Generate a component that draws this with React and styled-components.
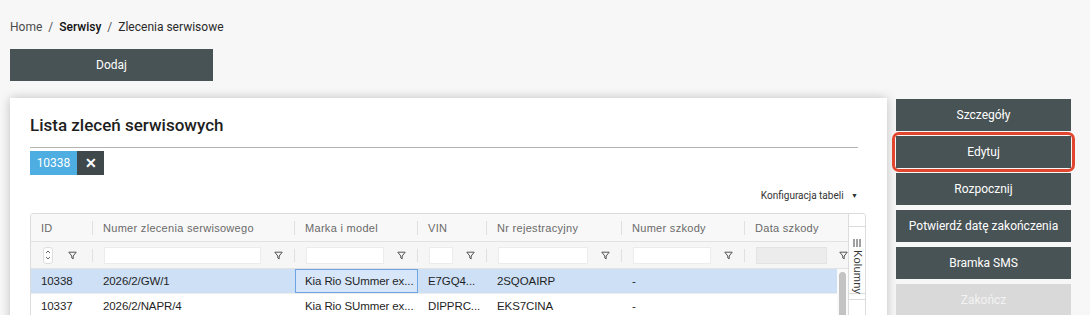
import React from 'react';
import styled, { createGlobalStyle } from 'styled-components';

const GlobalStyle = createGlobalStyle`
  body {
    margin: 0;
    background: #f7f7f7;
    font-family: Roboto, "Liberation Sans", sans-serif;
    color: #222;
  }
`;

const columns = [
  { key: 'id', title: 'ID', width: 62 },
  { key: 'number', title: 'Numer zlecenia serwisowego', width: 202 },
  { key: 'model', title: 'Marka i model', width: 123 },
  { key: 'vin', title: 'VIN', width: 69 },
  { key: 'plate', title: 'Nr rejestracyjny', width: 135 },
  { key: 'claim', title: 'Numer szkody', width: 123 },
  { key: 'claimDate', title: 'Data szkody', width: 103 },
];

const rows = [
  { id: '10338', number: '2026/2/GW/1', model: 'Kia Rio SUmmer ex...', vin: 'E7GQ4...', plate: '2SQOAIRP', claim: '-', claimDate: '' },
  { id: '10337', number: '2026/2/NAPR/4', model: 'Kia Rio SUmmer ex...', vin: 'DIPPRC...', plate: 'EKS7CINA', claim: '-', claimDate: '' },
];

const actions = ['Szczegóły', 'Edytuj', 'Rozpocznij', 'Potwierdź datę zakończenia', 'Bramka SMS', 'Zakończ'];

const headerTemplate = columns.map((c) => `${c.width}px`).join(' ');
const bodyTemplate = columns.map((c, i) => (i === columns.length - 1 ? `${c.width - 11}px` : `${c.width}px`)).join(' ');

const FunnelIcon = () => (
  <svg width="9" height="9" viewBox="0 0 9 9">
    <path d="M0.8 1.2 H8.2 L5.2 5 V7.8 L3.8 7 V5 Z" fill="none" stroke="#444" strokeWidth="0.9" strokeLinejoin="round" />
  </svg>
);

const SortIcon = () => (
  <SortBox>
    <svg width="6" height="12" viewBox="0 0 6 12">
      <path d="M1 4 L3 2 L5 4" fill="none" stroke="#555" strokeWidth="0.9" />
      <path d="M1 8 L3 10 L5 8" fill="none" stroke="#555" strokeWidth="0.9" />
    </svg>
  </SortBox>
);

// three vertical bars, like the "columns" tool icon
const ColumnsIcon = () => (
  <svg width="8" height="8" viewBox="0 0 8 8" style={{ flexShrink: 0 }}>
    <rect x="0.5" y="0" width="1" height="8" fill="#444" />
    <rect x="3.5" y="0" width="1" height="8" fill="#444" />
    <rect x="6.5" y="0" width="1" height="8" fill="#444" />
  </svg>
);

export default function App() {
  return (
    <Page>
      <GlobalStyle />
      <Breadcrumb>
        <Crumb>Home</Crumb>
        <Slash>/</Slash>
        <Crumb $strong>Serwisy</Crumb>
        <Slash>/</Slash>
        <Crumb $current>Zlecenia serwisowe</Crumb>
      </Breadcrumb>

      <AddButton type="button">Dodaj</AddButton>

      <MainRow>
        <Card>
          <CardHeader>
            <Title>Lista zleceń serwisowych</Title>
            <Divider />
            <Tag>
              <TagLabel>10338</TagLabel>
              <TagRemove type="button">✕</TagRemove>
            </Tag>
            <ConfigRow>
              <ConfigLink>
                Konfiguracja tabeli <Caret>▼</Caret>
              </ConfigLink>
            </ConfigRow>
          </CardHeader>

          <Grid>
            <GridMain>
              <HeaderRow>
                {columns.map((c, i) => (
                  <HeaderCell key={c.key} $last={i === columns.length - 1}>
                    {c.title}
                  </HeaderCell>
                ))}
              </HeaderRow>
              <FilterRow>
                {columns.map((c, i) => (
                  <FilterCell key={c.key} $last={i === columns.length - 1}>
                    {c.key === 'id' ? (
                      <>
                        <SortIcon />
                        <FilterButton $wide>
                          <FunnelIcon />
                        </FilterButton>
                      </>
                    ) : (
                      <>
                        <FilterInput disabled={c.key === 'claimDate'} />
                        <FilterButton $tight={i === columns.length - 1}>
                          <FunnelIcon />
                        </FilterButton>
                      </>
                    )}
                  </FilterCell>
                ))}
              </FilterRow>
              <Body>
                <Rows>
                  {rows.map((r, ri) => (
                    <DataRow key={r.id} $selected={ri === 0}>
                      {columns.map((c) => (
                        <DataCell key={c.key} $focused={ri === 0 && c.key === 'model'}>
                          {r[c.key]}
                        </DataCell>
                      ))}
                    </DataRow>
                  ))}
                </Rows>
                <Scrollbar>
                  <ScrollThumb />
                </Scrollbar>
              </Body>
            </GridMain>
            <SideBar>
              <SideTab>
                <ColumnsIcon />
                <SideLabel>Kolumny</SideLabel>
              </SideTab>
              <SideTab $empty />
            </SideBar>
          </Grid>
        </Card>

        <Actions>
          {actions.map((a) => (
            <ActionButton key={a} type="button" $highlighted={a === 'Edytuj'} disabled={a === 'Zakończ'}>
              {a}
            </ActionButton>
          ))}
        </Actions>
      </MainRow>
    </Page>
  );
}

const Page = styled.div`
  padding: 17px 0 0 10px;
  height: 315px;
  box-sizing: border-box;
  overflow: hidden;
`;

const Breadcrumb = styled.nav`
  display: flex;
  align-items: center;
  height: 19px;
  font-size: 12px;
`;

const Crumb = styled.span`
  color: ${(p) => (p.$strong ? '#111' : p.$current ? '#2a2a2a' : '#4a4a4a')};
  font-weight: ${(p) => (p.$strong ? 500 : 400)};
`;

const Slash = styled.span`
  color: #555;
  margin: 0 6px;
`;

const AddButton = styled.button`
  display: block;
  margin-top: 13px;
  width: 203px;
  height: 32px;
  border: none;
  background: #485355;
  color: #fff;
  font-family: Roboto, "Liberation Sans", sans-serif;
  font-size: 12px;
  font-weight: 400;
`;

const MainRow = styled.div`
  display: flex;
  align-items: flex-start;
  margin-top: 17px;
`;

const Card = styled.section`
  width: 877px;
  height: 240px;
  flex-shrink: 0;
  background: #fff;
  box-shadow: 0 0 10px rgba(0, 0, 0, 0.22);
  padding: 16px 21px 0 20px;
  box-sizing: border-box;
`;

const CardHeader = styled.div`
  padding-right: 8px;
`;

const Title = styled.h1`
  margin: 0;
  font-size: 17px;
  line-height: 22px;
  font-weight: 500;
  color: #1e1e1e;
`;

const Divider = styled.hr`
  margin: 11px 0 0;
  border: none;
  border-top: 1px solid #b3b3b3;
`;

const Tag = styled.div`
  display: inline-flex;
  margin-top: 3px;
  height: 24px;
`;

const TagLabel = styled.span`
  display: flex;
  align-items: center;
  justify-content: center;
  width: 47px;
  background: #4eaee2;
  color: #fff;
  font-size: 12px;
`;

const TagRemove = styled.button`
  width: 27px;
  border: none;
  padding: 0;
  background: #3f494c;
  color: #fff;
  font-size: 14px;
  font-weight: 700;
`;

const ConfigRow = styled.div`
  display: flex;
  justify-content: flex-end;
  margin-top: 13px;
  height: 16px;
`;

const ConfigLink = styled.span`
  font-size: 10px;
  color: #333;
  line-height: 16px;
`;

const Caret = styled.span`
  font-size: 7px;
  margin-left: 5px;
  vertical-align: 1px;
`;

const Grid = styled.div`
  display: flex;
  margin-top: 9px;
  border: 1px solid #dcdcdc;
  border-radius: 3px 3px 0 0;
  font-family: "Liberation Sans", Arial, sans-serif;
  overflow: hidden;
`;

const GridMain = styled.div`
  display: flex;
  flex-direction: column;
`;

const HeaderRow = styled.div`
  display: grid;
  grid-template-columns: ${headerTemplate};
  height: 27px;
  background: #f8f8f8;
  border-bottom: 1px solid #e2e2e2;
`;

const Separator = `
  content: '';
  position: absolute;
  right: 0;
  width: 1px;
  background: #e0e0e0;
`;

const HeaderCell = styled.div`
  position: relative;
  display: flex;
  align-items: center;
  padding-left: 10px;
  color: #6a6a6a;
  font-size: 11px;
  letter-spacing: 0.3px;
  white-space: nowrap;
  overflow: hidden;

  &::after {
    ${Separator}
    top: 7px;
    bottom: 6px;
    display: ${(p) => (p.$last ? 'none' : 'block')};
  }
`;

const FilterRow = styled.div`
  display: grid;
  grid-template-columns: ${headerTemplate};
  height: 26px;
  background: #f6f6f6;
  border-bottom: 1px solid #e2e2e2;
`;

const FilterCell = styled.div`
  position: relative;
  display: flex;
  align-items: center;
  padding-left: 11px;

  &::after {
    ${Separator}
    top: 7px;
    bottom: 6px;
    display: ${(p) => (p.$last ? 'none' : 'block')};
  }
`;

const SortBox = styled.span`
  display: flex;
  align-items: center;
  justify-content: center;
  width: 10px;
  height: 17px;
  margin-left: 1px;
  background: #fff;
  border: 1px solid #dedede;
  border-radius: 3px;
  box-sizing: border-box;
`;

const FilterInput = styled.input`
  flex: 1;
  min-width: 0;
  height: 17px;
  padding: 0;
  border: 1px solid ${(p) => (p.disabled ? '#e3e3e3' : '#ececec')};
  background: ${(p) => (p.disabled ? '#ececec' : '#fff')};
  box-sizing: border-box;
`;

const FilterButton = styled.span`
  display: flex;
  align-items: center;
  justify-content: center;
  width: ${(p) => (p.$tight ? '21px' : p.$wide ? '42px' : '34px')};
  padding-left: ${(p) => (p.$tight ? '11px' : '0')};
  box-sizing: border-box;
`;

const Body = styled.div`
  display: flex;
  height: 60px;
`;

const Rows = styled.div`
  display: flex;
  flex-direction: column;
`;

const DataRow = styled.div`
  display: grid;
  grid-template-columns: ${bodyTemplate};
  height: 24px;
  background: ${(p) => (p.$selected ? '#cde0f6' : '#fff')};
  border-bottom: 1px solid #ececec;
`;

const DataCell = styled.div`
  display: flex;
  align-items: center;
  padding: 0 3px 0 10px;
  color: #1f1f1f;
  font-size: 11.5px;
  letter-spacing: -0.1px;
  white-space: nowrap;
  overflow: hidden;
  box-sizing: border-box;
  ${(p) => p.$focused && 'box-shadow: inset 0 0 0 1px #6ea4e4; background: #d7e7f9;'}
`;

const Scrollbar = styled.div`
  width: 11px;
  background: #fafafa;
  padding: 3px 2px 0;
  box-sizing: border-box;
`;

const ScrollThumb = styled.div`
  width: 7px;
  height: 80px;
  border-radius: 4px;
  background: #c3c3c3;
`;

const SideBar = styled.aside`
  width: 17px;
  border-left: 1px solid #dcdcdc;
  background: #fff;
  padding-top: 12px;
`;

const SideTab = styled.div`
  display: flex;
  flex-direction: column;
  align-items: center;
  gap: 3px;
  padding-top: ${(p) => (p.$empty ? '0' : '12px')};
  height: ${(p) => (p.$empty ? '20px' : '68px')};
  border-top: 1px solid #dcdcdc;
  border-bottom: ${(p) => (p.$empty ? 'none' : '1px solid #dcdcdc')};
  margin-bottom: 5px;
  box-sizing: border-box;
`;

const SideLabel = styled.span`
  writing-mode: vertical-rl;
  font-size: 11px;
  line-height: 13px;
  color: #333;
  letter-spacing: 0.2px;
`;

const Actions = styled.div`
  display: flex;
  flex-direction: column;
  gap: 5px;
  width: 175px;
  margin: 1px 0 0 9px;
`;

const ActionButton = styled.button`
  position: relative;
  height: 32px;
  border: none;
  padding: 0;
  background: #485355;
  color: #fff;
  font-family: Roboto, "Liberation Sans", sans-serif;
  font-size: 12px;
  font-weight: 400;

  &:disabled {
    background: #d9d9d9;
    color: #f3f3f3;
  }

  &::after {
    content: '';
    display: ${(p) => (p.$highlighted ? 'block' : 'none')};
    position: absolute;
    inset: -4px;
    border: 3px solid #e2462f;
    border-radius: 7px;
    pointer-events: none;
  }
`;
